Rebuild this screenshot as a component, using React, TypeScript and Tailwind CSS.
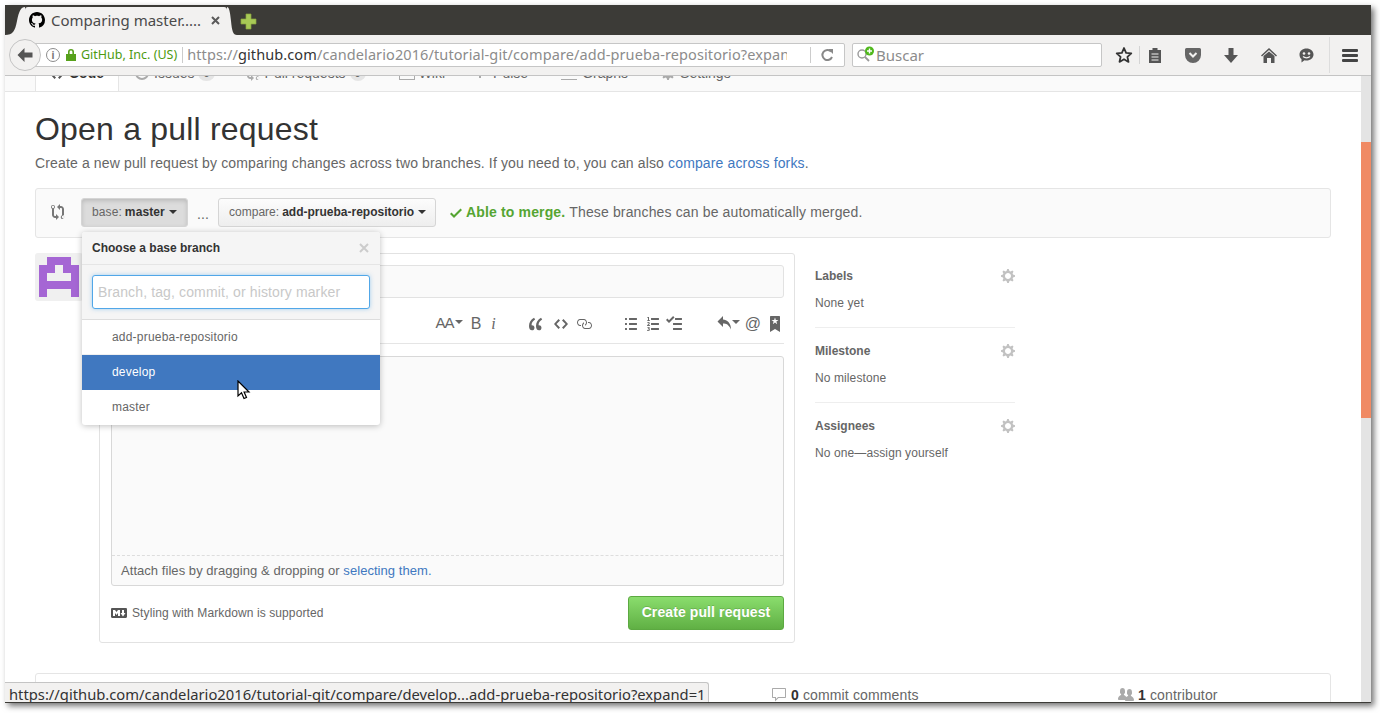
import type { ReactNode } from 'react';

const uiFont = "font-['Noto_Sans',sans-serif]";
const pageFont = "font-['Liberation_Sans',Arial,sans-serif]";

function Octicon({ d, w, h, className }: { d: string; w: number; h: number; className?: string }) {
  return (
    <svg viewBox={`0 0 ${w} ${h}`} width={w} height={h} className={className} fill="currentColor">
      <path fillRule="evenodd" d={d} />
    </svg>
  );
}

const paths = {
  github:
    'M8 0C3.58 0 0 3.58 0 8c0 3.54 2.29 6.53 5.47 7.59.4.07.55-.17.55-.38 0-.19-.01-.82-.01-1.49-2.01.37-2.53-.49-2.69-.94-.09-.23-.48-.94-.82-1.13-.28-.15-.68-.52-.01-.53.63-.01 1.08.58 1.23.82.72 1.21 1.87.87 2.33.66.07-.52.28-.87.51-1.07-1.78-.2-3.64-.89-3.64-3.95 0-.87.31-1.59.82-2.15-.08-.2-.36-1.02.08-2.12 0 0 .67-.21 2.2.82.64-.18 1.32-.27 2-.27.68 0 1.36.09 2 .27 1.53-1.04 2.2-.82 2.2-.82.44 1.1.16 1.92.08 2.12.51.56.82 1.27.82 2.15 0 3.07-1.87 3.75-3.65 3.95.29.25.54.73.54 1.48 0 1.07-.01 1.93-.01 2.2 0 .21.15.46.55.38A8.013 8.013 0 0 0 16 8c0-4.42-3.58-8-8-8z',
  compare:
    'M5 12H4c-.27-.02-.48-.11-.69-.31-.21-.2-.3-.42-.31-.69V4.72A1.993 1.993 0 0 0 2 1a1.993 1.993 0 0 0-1 3.72V11c.03.78.34 1.47.94 2.06.6.59 1.28.91 2.06.94h1v2l3-3-3-3v2zM2 1.8c.66 0 1.2.55 1.2 1.2 0 .65-.55 1.2-1.2 1.2C1.35 4.2.8 3.65.8 3c0-.65.55-1.2 1.2-1.2zm11 9.48V5c-.03-.78-.34-1.47-.94-2.06-.6-.59-1.28-.91-2.06-.94H9V0L6 3l3 3V4h1c.27.02.48.11.69.31.21.2.3.42.31.69v6.28A1.993 1.993 0 0 0 11 15a1.993 1.993 0 0 0 1-3.72zm-1 2.92c-.66 0-1.2-.55-1.2-1.2 0-.65.55-1.2 1.2-1.2.65 0 1.2.55 1.2 1.2 0 .65-.55 1.2-1.2 1.2z',
  check: 'M12 5l-8 8-4-4 1.5-1.5L4 10l6.5-6.5L12 5z',
  gear: 'M14 8.77v-1.6l-1.94-.64-.45-1.09.88-1.84-1.13-1.13-1.81.91-1.09-.45-.69-1.92h-1.6l-.63 1.94-1.11.45-1.84-.88-1.13 1.13.91 1.81-.45 1.09L0 7.23v1.59l1.94.64.45 1.09-.88 1.84 1.13 1.13 1.81-.91 1.09.45.69 1.92h1.59l.63-1.94 1.11-.45 1.84.88 1.13-1.13-.92-1.81.47-1.09L14 8.75v.02zM7 11c-1.66 0-3-1.34-3-3s1.34-3 3-3 3 1.34 3 3-1.34 3-3 3z',
  markdown:
    'M14.85 3H1.15C.52 3 0 3.52 0 4.15v7.69C0 12.48.52 13 1.15 13h13.69c.64 0 1.15-.52 1.15-1.15v-7.7C16 3.52 15.48 3 14.85 3zM9 11H7V8L5.5 9.92 4 8v3H2V5h2l1.5 2L7 5h2v6zm2.99.5L9.5 8H11V5h2v3h1.5l-2.51 3.5z',
  quote:
    'M6.16 3.5C3.73 5.06 2.55 6.67 2.55 9.36c.16-.05.3-.05.44-.05 1.27 0 2.5.86 2.5 2.41 0 1.61-1.03 2.61-2.5 2.61-1.9 0-2.99-1.52-2.99-4.25 0-3.8 1.75-6.53 5.02-8.42L6.16 3.5zm7 0c-2.43 1.56-3.61 3.17-3.61 5.86.16-.05.3-.05.44-.05 1.27 0 2.5.86 2.5 2.41 0 1.61-1.03 2.61-2.5 2.61-1.89 0-2.98-1.52-2.98-4.25 0-3.8 1.75-6.53 5.02-8.42l1.14 1.84h-.01z',
  code: 'M9.5 3L8 4.5 11.5 8 8 11.5 9.5 13 14 8 9.5 3zm-5 0L0 8l4.5 5L6 11.5 2.5 8 6 4.5 4.5 3z',
  link: 'M4 9h1v1H4c-1.5 0-3-1.69-3-3.5S2.55 3 4 3h4c1.45 0 3 1.69 3 3.5 0 1.41-.91 2.72-2 3.25V8.59c.58-.45 1-1.27 1-2.09C10 5.22 8.98 4 8 4H4c-.98 0-2 1.22-2 2.5S3 9 4 9zm9-3h-1v1h1c1 0 2 1.22 2 2.5S13.98 12 13 12H9c-.98 0-2-1.22-2-2.5 0-.83.42-1.64 1-2.09V6.25c-1.09.53-2 1.84-2 3.25C6 11.31 7.55 13 9 13h4c1.45 0 3-1.69 3-3.5S14.5 6 13 6z',
  list: 'M2 13c0 .59 0 1-.59 1H.59C0 14 0 13.59 0 13c0-.59 0-1 .59-1h.81c.59 0 .59.41.59 1H2zm2.59-9h6.81c.59 0 .59-.41.59-1 0-.59 0-1-.59-1H4.59C4 2 4 2.41 4 3c0 .59 0 1 .59 1zM1.41 7H.59C0 7 0 7.41 0 8c0 .59 0 1 .59 1h.81c.59 0 .59-.41.59-1 0-.59 0-1-.59-1h.01zm0-5H.59C0 2 0 2.41 0 3c0 .59 0 1 .59 1h.81c.59 0 .59-.41.59-1 0-.59 0-1-.59-1h.01zm10 5H4.59C4 7 4 7.41 4 8c0 .59 0 1 .59 1h6.81c.59 0 .59-.41.59-1 0-.59 0-1-.59-1h.01zm0 5H4.59C4 12 4 12.41 4 13c0 .59 0 1 .59 1h6.81c.59 0 .59-.41.59-1 0-.59 0-1-.59-1h.01z',
  orderedList:
    'M12 13c0 .59 0 1-.59 1H4.59C4 14 4 13.59 4 13c0-.59 0-1 .59-1h6.81c.59 0 .59.41.59 1H12zM4.59 4h6.81c.59 0 .59-.41.59-1 0-.59 0-1-.59-1H4.59C4 2 4 2.41 4 3c0 .59 0 1 .59 1zm6.81 3H4.59C4 7 4 7.41 4 8c0 .59 0 1 .59 1h6.81c.59 0 .59-.41.59-1 0-.59 0-1-.59-1zM2 1h-.72c-.3.19-.58.25-1.03.34V2H1v2.14H.16V5H3v-.86H2V1zm.25 8.13c-.17 0-.45.03-.66.06.53-.56 1.14-1.25 1.14-1.89C2.71 6.52 2.17 6 1.37 6c-.59 0-.97.2-1.38.64l.58.58c.19-.19.38-.38.64-.38.28 0 .48.16.48.52 0 .53-.77 1.2-1.7 2.06V10h3l-.09-.88h-.66l.01.01zm-.08 3.78v-.03c.44-.19.64-.47.64-.86 0-.7-.56-1.11-1.44-1.11-.48 0-.89.19-1.28.52l.55.64c.25-.2.44-.31.69-.31.27 0 .42.13.42.36 0 .27-.2.44-.86.44v.75c.83 0 .98.17.98.47 0 .25-.23.38-.58.38-.28 0-.56-.14-.81-.38l-.48.66c.3.36.77.56 1.41.56.83 0 1.53-.41 1.53-1.16-.02-.45-.25-.75-.77-.89z',
  tasklist:
    'M15.41 9H7.59C7 9 7 8.59 7 8c0-.59 0-1 .59-1h7.81c.59 0 .59.41.59 1 0 .59 0 1-.59 1h.01zM9.59 4C9 4 9 3.59 9 3c0-.59 0-1 .59-1h5.81c.59 0 .59.41.59 1 0 .59 0 1-.59 1H9.59zM0 3.91l1.41-1.3L3 4.2 7.09 0 8.5 1.41 3 6.91l-3-3zM7.59 12h7.81c.59 0 .59.41.59 1 0 .59 0 1-.59 1H7.59C7 14 7 13.59 7 13c0-.59 0-1 .59-1z',
  reply: 'M6 3.5c3.92.44 8 3.125 8 10-2.312-5.062-4.75-6-8-6V11L.5 5.5 6 0v3.5z',
  bookmark:
    'M9 0H1C.27 0 0 .27 0 1v15l5-3.09L10 16V1c0-.73-.27-1-1-1zm-.78 4.25L6.36 5.61l.72 2.16c.06.22-.02.28-.2.17L5 6.6 3.12 7.94c-.19.11-.25.05-.2-.17l.72-2.16-1.86-1.36c-.17-.16-.14-.23.09-.23l2.3-.03.7-2.16h.25l.7 2.16 2.3.03c.23 0 .27.08.09.23h.01z',
  comment:
    'M14 1H2c-.55 0-1 .45-1 1v8c0 .55.45 1 1 1h2v3.5L7.5 11H14c.55 0 1-.45 1-1V2c0-.55-.45-1-1-1zm0 9H7l-2 2v-2H2V2h12v8z',
  people:
    'M16 12.999c0 .439-.45 1-1 1H7.995c-.539 0-.994-.447-.995-.999H1c-.54 0-1-.561-1-1 0-2.634 3-4 3-4s.229-.409 0-1c-.841-.621-1.058-.59-1-3 .058-2.419 1.367-3 2.5-3s2.442.58 2.5 3c.058 2.41-.159 2.379-1 3-.229.59 0 1 0 1s1.549.711 2.42 2.088C9.196 9.369 10 8.999 10 8.999s.229-.409 0-1c-.841-.62-1.058-.59-1-3 .058-2.419 1.367-3 2.5-3s2.437.581 2.495 3c.059 2.41-.158 2.38-1 3-.229.59 0 1 0 1s3.005 1.366 3.005 4z',
};

function BrowserTab() {
  return (
    <div className="flex h-[28px] items-stretch self-end">
      <svg width="20" height="28" viewBox="0 0 20 28" className="shrink-0">
        <path d="M0 28C8 28 10 24 12 14C14 4 16 0 20 0V28Z" fill="#f2f1f0" />
      </svg>
      <div className={`flex w-[202px] items-center rounded-t-[3px] bg-[#f2f1f0] pb-[2px] ${uiFont}`}>
        <Octicon d={paths.github} w={16} h={16} className="ml-[4px] shrink-0 text-black" />
        <span className="ml-[6px] w-[160px] whitespace-nowrap text-[15px] leading-none text-[#4a4a4a]">Comparing master.....</span>
        <svg width="9" height="9" viewBox="0 0 9 9" className="shrink-0">
          <path d="M1 1l7 7M8 1l-7 7" stroke="#5a5a5a" strokeWidth="2" />
        </svg>
      </div>
      <svg width="10" height="28" viewBox="0 0 10 28" className="shrink-0">
        <path d="M10 28C6 28 5 24 4 14C3 4 2 0 0 0V28Z" fill="#f2f1f0" />
      </svg>
    </div>
  );
}

function PlusIcon() {
  return (
    <svg width="17" height="17" viewBox="0 0 17 17" className="ml-[3px] mt-[2px]">
      <path d="M6 1h5v5h5v5h-5v5H6v-5H1V6h5z" fill="#a8c956" stroke="#8aa63e" strokeWidth="0.7" />
    </svg>
  );
}

function NavBar() {
  return (
    <div className={`relative flex h-[41px] shrink-0 items-center border-b border-[#c4c4c4] bg-[#f2f1f0] ${uiFont}`}>
      {/* back button sits over the start of the url field */}
      <div className="absolute left-[4px] top-[4px] z-10 flex h-[32px] w-[32px] items-center justify-center rounded-full border border-[#c4c4c4] bg-[#f2f1f0]">
        <svg width="16" height="14" viewBox="0 0 16 14">
          <path d="M7.5 0L0.5 7l7 7V9.5H15.5v-5H7.5z" fill="#555" />
        </svg>
      </div>
      <div className="ml-[28px] flex h-[24px] w-[812px] items-center rounded-r-[2px] border border-[#c6c6c6] bg-white">
        <div className="ml-[12px] flex h-[14px] w-[14px] items-center justify-center rounded-full border border-[#8c8c8c] text-[10px] font-bold leading-none text-[#777]">i</div>
        <svg width="12" height="14" viewBox="0 0 12 14" className="ml-[5px]">
          <path d="M3 6V4a3 3 0 0 1 6 0v2h2v7H1V6zM4.6 6h2.8V4a1.4 1.4 0 0 0-2.8 0z" fill="#57a11c" fillRule="evenodd" />
        </svg>
        <span className="ml-[4px] whitespace-nowrap text-[12.5px] text-[#4d9a10]">GitHub, Inc. (US)</span>
        <span className="ml-[5px] h-[16px] w-px bg-[#ccc]" />
        <span className="ml-[4px] w-[600px] overflow-hidden whitespace-nowrap text-[14.5px] tracking-[0.1px] text-[#8c8c8c]">
          https://<span className="text-[#333]">github.com</span>/candelario2016/tutorial-git/compare/add-prueba-repositorio?expand=1
        </span>
        <span className="ml-[23px] h-[16px] w-px bg-[#ccc]" />
        <svg width="14" height="14" viewBox="0 0 14 14" className="ml-[9px]">
          <path d="M11 3.5A5 5 0 1 0 12 9" fill="none" stroke="#888" strokeWidth="2" />
          <path d="M8 1h5v5z" fill="#888" />
        </svg>
      </div>
      <div className="ml-[7px] flex h-[24px] w-[250px] items-center rounded-[2px] border border-[#c6c6c6] bg-white">
        <svg width="20" height="18" viewBox="0 0 20 18" className="ml-[3px] shrink-0">
          <circle cx="6" cy="8" r="4" fill="none" stroke="#999" strokeWidth="1.4" />
          <path d="M9 11l4 4" stroke="#999" strokeWidth="1.8" />
          <circle cx="13.5" cy="5" r="4.5" fill="#4fb81c" />
          <path d="M13.5 2.5v5M11 5h5" stroke="#fff" strokeWidth="1.4" />
        </svg>
        <span className="text-[15px] text-[#8c8c8c]">Buscar</span>
      </div>
      <svg width="18" height="18" viewBox="0 0 18 18" className="ml-[13px]">
        <path d="M9 2l2.1 4.8 5.2.5-3.9 3.5 1.1 5.1L9 13.2l-4.5 2.7 1.1-5.1L1.7 7.3l5.2-.5z" fill="none" stroke="#333" strokeWidth="1.8" strokeLinejoin="round" />
      </svg>
      <span className="ml-[6px] h-[18px] w-px bg-[#d4d4d4]" />
      <svg width="14" height="16" viewBox="0 0 14 16" className="ml-[8px]">
        <path d="M1 3h3.5V1h5v2H13v13H1z" fill="#555" />
        <path d="M3.5 7h7M3.5 10h7M3.5 13h7" stroke="#f2f1f0" strokeWidth="1.2" />
      </svg>
      <svg width="16" height="15" viewBox="0 0 16 15" className="ml-[23px]">
        <path d="M1.5 0h13A1.5 1.5 0 0 1 16 1.5V7A8 8 0 0 1 0 7V1.5A1.5 1.5 0 0 1 1.5 0z" fill="#666" />
        <path d="M4.5 5L8 8.5 11.5 5" fill="none" stroke="#f2f1f0" strokeWidth="2" />
      </svg>
      <svg width="14" height="15" viewBox="0 0 14 15" className="ml-[23px]">
        <path d="M4.5 0h5v7H14l-7 8-7-8h4.5z" fill="#555" />
      </svg>
      <svg width="16" height="15" viewBox="0 0 16 15" className="ml-[23px]">
        <path d="M8 0L16 7.5l-1 1L8 2 1 8.5l-1-1z" fill="#555" />
        <path d="M2.5 8L8 3.5 13.5 8v7H10V10H6v5H2.5z" fill="#555" />
      </svg>
      <svg width="15" height="15" viewBox="0 0 15 15" className="ml-[22px]">
        <path d="M7.5 0.5c4 0 7 2.6 7 6s-3 6-7 6c-.7 0-1.3-.1-2-.2L2.5 14.5V11C1 10 .5 8.3 .5 6.5c0-3.4 3-6 7-6z" fill="#555" />
        <circle cx="5" cy="5.5" r="1.3" fill="#f2f1f0" />
        <circle cx="10" cy="5.5" r="1.3" fill="#f2f1f0" />
        <path d="M4 8.5c1.8 1.7 5.2 1.7 7 0" fill="none" stroke="#f2f1f0" strokeWidth="1.2" />
      </svg>
      <span className="ml-[15px] h-[36px] w-px bg-[#dddddd]" />
      <div className="ml-[12px] flex w-[16px] flex-col gap-[2px]">
        <span className="h-[3px] rounded-[1px] bg-[#444]" />
        <span className="h-[3px] rounded-[1px] bg-[#444]" />
        <span className="h-[3px] rounded-[1px] bg-[#444]" />
      </div>
    </div>
  );
}

function Badge() {
  return <span className="ml-[4px] rounded-full bg-[#e5e5e5] px-[5px] text-[11px] font-bold leading-[16px] text-[#666]">0</span>;
}

function RepoNav() {
  const tab = 'flex items-center whitespace-nowrap text-[14px] text-[#666]';
  return (
    <div className="h-[16px] shrink-0 overflow-hidden border-b border-[#e5e5e5] bg-[#fafafa] pl-[30px]">
      <div className="-mt-[23px] flex h-[40px]">
        <div className="flex h-[41px] w-[84px] items-center justify-center border-x border-[#e5e5e5] bg-white text-[14px] font-bold text-[#333]">
          <Octicon d={paths.code} w={14} h={16} className="mr-[5px] text-[#555]" />
          Code
        </div>
        <div className={`${tab} ml-[16px]`}>
          <span className="mr-[5px] h-[14px] w-[14px] rounded-full border-2 border-[#aaa]" />
          Issues
          <Badge />
        </div>
        <div className={`${tab} ml-[31px]`}>
          <Octicon d={paths.compare} w={14} h={16} className="mr-[5px] text-[#aaa]" />
          Pull requests
          <Badge />
        </div>
        <div className={`${tab} ml-[33px]`}>
          <span className="mr-[4px] h-[14px] w-[16px] border border-[#aaa]" />
          Wiki
        </div>
        <div className={`${tab} ml-[34px]`}>
          <span className="mr-[5px] h-[10px] w-[9px] border-l-2 border-[#aaa]" />
          Pulse
        </div>
        <div className={`${tab} ml-[33px]`}>
          <span className="mr-[5px] h-[14px] w-[16px] border-b border-[#aaa]" />
          Graphs
        </div>
        <div className={`${tab} ml-[33px]`}>
          <Octicon d={paths.gear} w={14} h={16} className="mr-[5px] text-[#aaa]" />
          Settings
        </div>
      </div>
    </div>
  );
}

function CompareBar() {
  const caret = 'ml-[4px] inline-block h-0 w-0 border-x-[4px] border-t-[4px] border-x-transparent border-t-[#333]';
  const button = 'flex h-[29px] items-center whitespace-nowrap rounded-[3px] border border-[#d5d5d5] px-[10px] text-[12px]';
  return (
    <div className="mt-[15px] flex h-[50px] items-center rounded-[3px] border border-[#e5e5e5] bg-[#fafafa] pb-[2px] text-[14px] tracking-[0.14px]">
      <Octicon d={paths.compare} w={14} h={16} className="ml-[15px] mr-[16px] shrink-0 text-[#777]" />
      <div className={`${button} w-[107px] border-[#b5b5b5] bg-[#dcdcdc] tracking-[0.1px] shadow-[inset_0_2px_4px_rgba(0,0,0,0.15)]`}>
        <span className="text-[#666]">base:</span>
        <b className="ml-[3px] text-[#333]">master</b>
        <span className={caret} />
      </div>
      <span className="mx-[9px] mt-[4px] text-[#666]">...</span>
      <div className={`${button} w-[218px] bg-gradient-to-b from-[#fcfcfc] to-[#eeeeee] tracking-[0px]`}>
        <span className="text-[#666]">compare:</span>
        <b className="ml-[3px] text-[#333]">add-prueba-repositorio</b>
        <span className={caret} />
      </div>
      <Octicon d={paths.check} w={12} h={16} className="ml-[14px] mr-[4px] mt-[2px] shrink-0 text-[#55a532]" />
      <b className="text-[#55a532]">Able to merge.</b>
      <span className="ml-[4px] text-[#666]">These branches can be automatically merged.</span>
    </div>
  );
}

function ToolGroup({ children, className }: { children: ReactNode; className?: string }) {
  return <div className={`flex items-center text-[#666] ${className ?? ''}`}>{children}</div>;
}

function Toolbar() {
  const smallCaret = 'ml-[1px] mb-[4px] inline-block h-0 w-0 border-x-[4px] border-t-[4px] border-x-transparent border-t-[#666]';
  return (
    <div className="mt-[12px] flex h-[34px] items-center justify-end border-b border-[#e5e5e5] pb-[6px] pr-[4px]">
      <ToolGroup>
        <span className="text-[15px] tracking-[-1px]">AA</span>
        <span className={smallCaret} />
        <b className="ml-[8px] text-[16px] font-normal">B</b>
        <i className="ml-[10px] font-['Liberation_Serif',serif] text-[16px]">i</i>
      </ToolGroup>
      <ToolGroup className="ml-[33px]">
        <Octicon d={paths.quote} w={14} h={16} />
        <Octicon d={paths.code} w={14} h={16} className="ml-[11px]" />
        <Octicon d={paths.link} w={16} h={16} className="ml-[8px]" />
      </ToolGroup>
      <ToolGroup className="ml-[33px]">
        <Octicon d={paths.list} w={12} h={16} />
        <Octicon d={paths.orderedList} w={12} h={16} className="ml-[10px]" />
        <Octicon d={paths.tasklist} w={16} h={16} className="ml-[7px]" />
      </ToolGroup>
      <ToolGroup className="ml-[35px]">
        <Octicon d={paths.reply} w={14} h={14} className="-mt-[2px]" />
        <span className={smallCaret} />
        <span className="ml-[5px] text-[16px]">@</span>
        <Octicon d={paths.bookmark} w={10} h={16} className="ml-[9px]" />
      </ToolGroup>
    </div>
  );
}

function SidebarItem({ title, text, last }: { title: string; text: string; last?: boolean }) {
  return (
    <div className={`h-[75px] pt-[15px] ${last ? '' : 'border-b border-[#eeeeee]'}`}>
      <div className="flex items-center justify-between">
        <b className="text-[12px] leading-[14px] text-[#666]">{title}</b>
        <Octicon d={paths.gear} w={14} h={16} className="text-[#c2c2c2]" />
      </div>
      <div className="mt-[12px] text-[12px] leading-[15px] tracking-[0.1px] text-[#666]">{text}</div>
    </div>
  );
}

function DiscussionBox() {
  return (
    <div className="ml-[16px] h-[390px] w-[696px] rounded-[3px] border border-[#e2e2e2] bg-white pl-[11px] pr-[10px] pt-[11px]">
      <div className="h-[33px] rounded-[3px] border border-[#e2e2e2] bg-[#fafafa]" />
      <Toolbar />
      <div className="mt-[12px] h-[230px] rounded-[3px] border border-[#d8d8d8] bg-[#fafafa]">
        <div className="h-[198px]" />
        <div className="border-t border-dashed border-[#dddddd] pl-[9px] text-[13px] leading-[29px] tracking-[0.05px] text-[#666]">
          Attach files by dragging &amp; dropping or <span className="text-[#4078c0]">selecting them.</span>
        </div>
      </div>
      <div className="mt-[10px] flex items-center justify-between">
        <div className="flex items-center text-[12px] tracking-[0.1px] text-[#666]">
          <Octicon d={paths.markdown} w={16} h={16} className="mr-[5px] text-[#555]" />
          Styling with Markdown is supported
        </div>
        <div className="flex h-[34px] w-[156px] items-center justify-center rounded-[3px] border border-[#5ca941] bg-gradient-to-b from-[#8add6d] to-[#60b044] pb-[2px] text-[14px] font-bold tracking-[0.1px] text-white [text-shadow:0_-1px_0_rgba(0,0,0,0.15)]">
          Create pull request
        </div>
      </div>
    </div>
  );
}

function BranchDropdown() {
  const row = 'h-[35px] pl-[30px] text-[12px] leading-[34px] tracking-[0.2px]';
  return (
    <div className="absolute left-[77px] top-[156px] z-20 w-[298px] overflow-hidden rounded-[3px] bg-white shadow-[0_1px_6px_rgba(0,0,0,0.25)]">
      <div className="flex h-[33px] items-center justify-between border-b border-[#e5e5e5] bg-[#f5f5f5] pl-[10px] pr-[10px] text-[12px] font-bold text-[#333]">
        Choose a base branch
        <svg width="12" height="12" viewBox="0 0 12 12">
          <path d="M2 2l8 8M10 2l-8 8" stroke="#cccccc" strokeWidth="2" />
        </svg>
      </div>
      <div className="h-[55px] border-b border-[#dddddd] bg-[#f5f5f5] px-[10px] pt-[10px]">
        <div className="flex h-[34px] items-center rounded-[3px] border border-[#51a7e8] bg-white pl-[5px] text-[14px] tracking-[0.13px] text-[#c8c8c8] shadow-[0_0_4px_rgba(81,167,232,0.5)]">
          Branch, tag, commit, or history marker
        </div>
      </div>
      <div className={`${row} border-b border-[#f0f0f0] text-[#666]`}>add-prueba-repositorio</div>
      <div className={`${row} bg-[#4078c0] text-white`}>develop</div>
      <div className={`${row} text-[#666]`}>master</div>
    </div>
  );
}

function Cursor() {
  return (
    <svg width="14" height="21" viewBox="0 0 14 21" className="absolute left-[232px] top-[304px] z-30">
      <path d="M1 1v15l3.5-3.2L7 18.5l2.5-1-2.4-5.5H12z" fill="#fff" stroke="#000" strokeWidth="1.2" />
    </svg>
  );
}

function Identicon() {
  const cells = [
    [0, 1, 1, 1, 0],
    [1, 1, 0, 1, 1],
    [1, 0, 0, 0, 1],
    [1, 1, 1, 1, 1],
    [1, 0, 0, 0, 1],
  ];
  return (
    <div className="h-[48px] w-[48px] shrink-0 rounded-[3px] bg-[#f0f0f0] p-[4px]">
      <svg width="40" height="40" viewBox="0 0 5 5" shapeRendering="crispEdges">
        {cells.flatMap((cols, y) =>
          cols.map((on, x) => (on ? <rect key={`${x}-${y}`} x={x} y={y} width="1" height="1" fill="#a566d4" /> : null)),
        )}
      </svg>
    </div>
  );
}

function PageContent() {
  return (
    <div className={`relative min-w-0 flex-1 overflow-hidden bg-white ${pageFont}`}>
      <RepoNav />
      <div className="px-[30px]">
        <h1 className="mt-[19px] text-[32px] leading-[36px] tracking-[0.2px] text-[#333]">Open a pull request</h1>
        <p className="mt-[6px] text-[14px] leading-[20px] tracking-[0.14px] text-[#666]">
          Create a new pull request by comparing changes across two branches. If you need to, you can also{' '}
          <span className="text-[#4078c0]">compare across forks</span>.
        </p>
        <CompareBar />
        <div className="mt-[15px] flex">
          <Identicon />
          <DiscussionBox />
          <div className="ml-[20px] w-[200px]">
            <SidebarItem title="Labels" text="None yet" />
            <SidebarItem title="Milestone" text="No milestone" />
            <SidebarItem title="Assignees" text="No one—assign yourself" last />
          </div>
        </div>
        <div className="mt-[30px] flex h-[60px] rounded-t-[3px] border border-[#e5e5e5] pt-[11px] text-[14px] tracking-[0.14px] text-[#666]">
          <div className="ml-[735px] flex h-[20px] w-[347px] items-center">
            <Octicon d={paths.comment} w={16} h={16} className="mr-[4px] text-[#aaa]" />
            <b className="mr-[4px] text-[#333]">0</b>
            commit comments
          </div>
          <div className="flex h-[20px] items-center">
            <Octicon d={paths.people} w={16} h={16} className="mr-[4px] text-[#aaa]" />
            <b className="mr-[4px] text-[#333]">1</b>
            contributor
          </div>
        </div>
      </div>
      <BranchDropdown />
      <Cursor />
    </div>
  );
}

export default function App() {
  return (
    <div className="h-[713px] w-[1380px] overflow-hidden bg-white pl-[5px] pt-[5px]">
      <div className="relative flex h-[698px] w-[1366px] flex-col overflow-hidden border-b border-[#3c3b37] shadow-[3px_3px_6px_rgba(0,0,0,0.55)]">
        <div className="flex h-[30px] shrink-0 items-center bg-[#3c3b37]">
          <BrowserTab />
          <PlusIcon />
        </div>
        <NavBar />
        <div className="flex min-h-0 flex-1">
          <PageContent />
          {/* scrollbar */}
          <div className="w-[10px] shrink-0 bg-[#e4e4e4] pt-[66px]">
            <div className="h-[276px] bg-[#f08a64]" />
          </div>
        </div>
        {/* status tooltip over the page */}
        <div className={`absolute bottom-0 left-0 z-40 h-[20px] w-[704px] whitespace-nowrap rounded-tr-[3px] border-r border-t border-[#c4c4c4] bg-[#f2f1f0] pl-[4px] text-[14.75px] leading-[22px] text-[#333] ${uiFont}`}>
          https://github.com/candelario2016/tutorial-git/compare/develop...add-prueba-repositorio?expand=1
        </div>
      </div>
    </div>
  );
}
